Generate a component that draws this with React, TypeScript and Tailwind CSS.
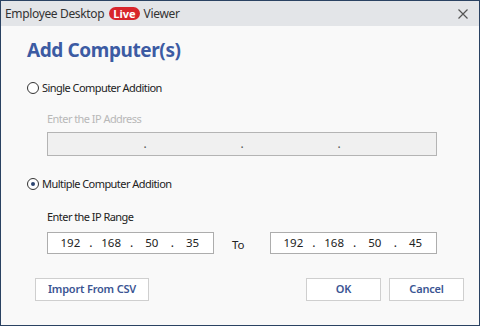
import React from 'react';

const FONT = { fontFamily: '"Noto Sans", "Open Sans", sans-serif' };

// one octet box; the dots sit on the borders between the segments
const IpField: React.FC<{ parts: string[]; disabled?: boolean; className?: string }> = ({
  parts,
  disabled,
  className = '',
}) => (
  <div
    className={`flex items-center border ${
      disabled ? 'border-[#b4b4b4] bg-[#f0f0f0]' : 'border-[#adadad] bg-white'
    } ${className}`}
  >
    {parts.map((p, i) => (
      <React.Fragment key={i}>
        {i > 0 && (
          <span className={`w-0 flex justify-center text-[12px] ${disabled ? 'text-[#555]' : 'text-[#222]'}`}>
            .
          </span>
        )}
        <span className="flex-1 text-center text-[11.5px] text-[#222]">{p}</span>
      </React.Fragment>
    ))}
  </div>
);

const Radio: React.FC<{ checked?: boolean; label: string }> = ({ checked, label }) => (
  <div className="flex items-center h-[16px]">
    <span className="w-[12px] h-[12px] rounded-full border border-[#333] bg-white flex items-center justify-center">
      {checked && <span className="w-[4px] h-[4px] rounded-full bg-[#2b4470]" />}
    </span>
    <span className="ml-[3px] text-[11px] text-[#222] tracking-[-0.55px]">{label}</span>
  </div>
);

const Btn: React.FC<{ label: string; className?: string }> = ({ label, className = '' }) => (
  <button
    className={`h-[23px] border border-[#cfcfcf] bg-white text-[11px] font-semibold text-[#3b5593] tracking-[-0.2px] ${className}`}
  >
    {label}
  </button>
);

export default function App() {
  return (
    <div style={FONT} className="w-[483px] h-[327px] bg-white">
      <div className="w-[480px] h-[326px] border border-[#2a4262] bg-[#f9f9f9] flex flex-col">
        {/* title bar */}
        <div className="h-[25px] bg-[#e3e5e8] flex items-center pl-[4px] pr-[11px] shrink-0">
          <span className="text-[12px] text-[#333] tracking-[-0.35px]">Employee Desktop</span>
          <span className="ml-[5px] h-[13px] px-[4px] rounded-full bg-[#d8252b] text-white text-[11px] font-bold leading-[13px]">
            Live
          </span>
          <span className="ml-[4px] text-[12px] text-[#333] tracking-[-0.3px]">Viewer</span>
          <svg className="ml-auto" width="10" height="10" viewBox="0 0 10 10">
            <path d="M0.5 0.5 L9.5 9.5 M9.5 0.5 L0.5 9.5" stroke="#555" strokeWidth="1.2" />
          </svg>
        </div>

        <div className="flex-1 pl-[26px] pt-[10px]">
          <h1 className="h-[28px] leading-[28px] text-[19px] font-bold text-[#3c5ba3] tracking-[-0.4px]">
            Add Computer(s)
          </h1>

          <div className="mt-[16px]">
            <Radio label="Single Computer Addition" />
          </div>
          <div className="ml-[20px] mt-[15px] h-[16px] leading-[16px] text-[11px] text-[#b8b8b8] tracking-[-0.55px]">
            Enter the IP Address
          </div>
          <IpField disabled parts={['', '', '', '']} className="ml-[20px] mt-[5px] w-[390px] h-[24px]" />

          <div className="mt-[20px]">
            <Radio checked label="Multiple Computer Addition" />
          </div>
          <div className="ml-[20px] mt-[17px] h-[16px] leading-[16px] text-[11px] text-[#222] tracking-[-0.55px]">
            Enter the IP Range
          </div>
          <div className="ml-[20px] mt-[7px] flex items-center">
            <IpField parts={['192', '168', '50', '35']} className="w-[167px] h-[22px] pl-[2px]" />
            <span className="w-[56px] pl-[18px] pt-[4px] text-[11.5px] text-[#222]">To</span>
            <IpField parts={['192', '168', '50', '45']} className="w-[167px] h-[22px] pl-[2px]" />
          </div>

          <div className="mt-[24px] flex pl-[8px] pr-[15px]">
            <Btn label="Import From CSV" className="w-[114px]" />
            <Btn label="OK" className="ml-auto w-[75px]" />
            <Btn label="Cancel" className="ml-[8px] w-[75px]" />
          </div>
        </div>
      </div>
    </div>
  );
}
